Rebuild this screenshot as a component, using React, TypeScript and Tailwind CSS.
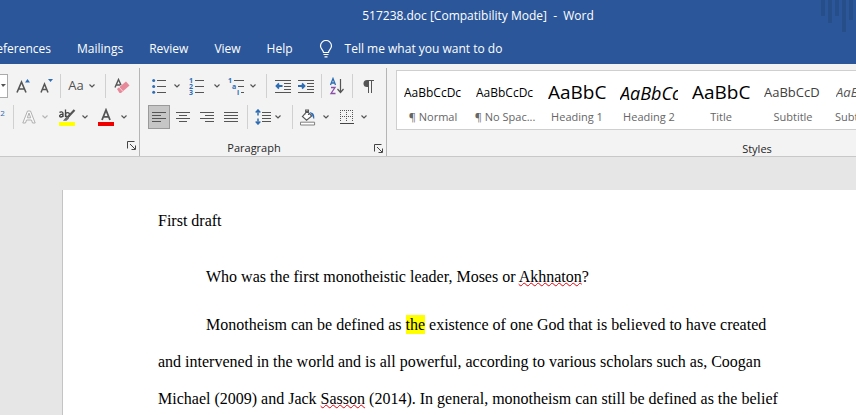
import type { ReactNode } from "react";

const tabs = ["Mailings", "Review", "View", "Help"];

const styles = [
  { name: "¶ Normal", sample: "AaBbCcDc", look: "text-xs text-black" },
  { name: "¶ No Spac...", sample: "AaBbCcDc", look: "text-xs text-black" },
  { name: "Heading 1", sample: "AaBbC", look: "text-[19px] text-black" },
  {
    name: "Heading 2",
    sample: "AaBbCc",
    look: "text-lg italic font-medium text-black",
  },
  { name: "Title", sample: "AaBbC", look: "text-[19px] text-black" },
  { name: "Subtitle", sample: "AaBbCcD", look: "text-[13px] text-[#404040]" },
  {
    name: "Subtle Em...",
    sample: "AaBbCcDd",
    look: "text-[13px] italic text-[#555555]",
  },
];

const bars = [16, 23, 16, 32, 20];

const Tool = ({
  label,
  className = "w-4",
  children,
}: {
  label: string;
  className?: string;
  children: ReactNode;
}) => (
  <button
    type="button"
    aria-label={label}
    className={`flex h-6 shrink-0 items-center justify-center ${className}`}
  >
    {children}
  </button>
);

const Arrow = ({
  label,
  className = "w-[18px]",
  color = "#555555",
}: {
  label: string;
  className?: string;
  color?: string;
}) => (
  <Tool label={label} className={className}>
    <svg width="6" height="4" viewBox="0 0 6 4" fill="none">
      <path d="M.5.5 3 3 5.5.5" stroke={color} strokeWidth="1.2" />
    </svg>
  </Tool>
);

const Divider = ({ className = "mx-[7px]" }: { className?: string }) => (
  <div className={`h-6 w-px shrink-0 bg-[#d0d0d0] ${className}`} />
);

const Launcher = ({ label }: { label: string }) => (
  <button type="button" aria-label={label}>
    <svg width="9" height="9" viewBox="0 0 9 9" fill="none" stroke="#444444">
      <path d="M.5 7.500V.5H7.500M3 3l5 5M8.500 4.500v4h-4" />
    </svg>
  </button>
);

const Lines = ({ d }: { d: string }) => (
  <svg width="14" height="12" viewBox="0 0 14 12" stroke="#555555">
    <path d={d} />
  </svg>
);

const Misspelled = ({ children }: { children: ReactNode }) => (
  <span className="underline decoration-red-600 decoration-wavy decoration-1 underline-offset-0 [text-decoration-skip-ink:none]">
    {children}
  </span>
);

const App = () => {
  return (
    <div className="flex h-screen flex-col overflow-hidden bg-[#e6e6e6] font-['Open_Sans',sans-serif] text-xs text-[#262626]">
      <header className="relative shrink-0 bg-[#2b579a] text-white">
        <svg
          className="absolute top-0 right-0"
          width="35"
          height="32"
          fill="#264f8a"
        >
          {bars.map((height, i) => (
            <rect key={i} x={i * 7} width="4" height={height} />
          ))}
        </svg>
        <h1 className="flex h-8 items-center justify-center pl-[100px] whitespace-pre">
          517238.doc [Compatibility Mode]  -  Word
        </h1>
        <nav className="flex h-8 items-center gap-[26px] pt-0.5 whitespace-nowrap">
          <a
            href="#references"
            className="flex w-[51px] justify-end overflow-hidden"
          >
            References
          </a>
          {tabs.map((tab) => (
            <a key={tab} href={`#${tab.toLowerCase()}`}>
              {tab}
            </a>
          ))}
          <button type="button" className="flex items-center gap-3">
            <svg
              width="14"
              height="18"
              viewBox="0 0 14 18"
              fill="none"
              stroke="white"
              strokeWidth="1.2"
            >
              <path d="M4.500 12.500C4.500 10 1.500 9 1.500 6a5.500 5.500 0 0 1 11 0c0 3-3 4-3 6.500zM4.500 14.500h5M5.500 16.800h3" />
            </svg>
            Tell me what you want to do
          </button>
        </nav>
      </header>

      <section className="flex h-[93px] shrink-0 overflow-hidden border-b border-[#c8c8c8] bg-[#f3f3f3] pt-1">
        <div className="flex w-[140px] shrink-0 flex-col border-r border-[#b5b5b5] pt-1.5">
          <div className="flex items-center">
            <Tool
              label="Font size"
              className="w-2 border border-l-0 border-[#ababab] bg-white"
            >
              <svg width="6" height="4" fill="#555555">
                <path d="M0 0h5L2 3z" />
              </svg>
            </Tool>
            <Tool label="Grow font" className="w-[30px]">
              <svg width="15" height="16" viewBox="0 0 15 16" fill="none">
                <path
                  d="M1 14.500 5.500 4 10 14.500M2.800 11h5.400"
                  stroke="#555555"
                  strokeWidth="1.6"
                />
                <path d="M9 4.500h5L11.500 1z" fill="#2e6db4" />
              </svg>
            </Tool>
            <Tool label="Shrink font" className="w-[18px]">
              <svg width="14" height="16" viewBox="0 0 14 16" fill="none">
                <path
                  d="M1 14.500 4.500 6 8 14.500M2.300 11.500h4.400"
                  stroke="#555555"
                  strokeWidth="1.5"
                />
                <path d="M8 1h5l-2.500 3z" fill="#2e6db4" />
              </svg>
            </Tool>
            <Divider className="mx-1" />
            <Tool label="Change case" className="w-[22px]">
              <span className="text-[13px] text-[#505050]">Aa</span>
            </Tool>
            <Arrow label="Case options" className="w-2.5" />
            <Divider className="mx-2" />
            <Tool label="Clear formatting">
              <svg width="16" height="16" viewBox="0 0 16 16" fill="none">
                <path
                  d="M1 9.500 4.500 1.500 7 7M2.300 7h4"
                  stroke="#555555"
                  strokeWidth="1.400"
                />
                <path d="m3 11 9-7.500 3.500 4L7 15H5.500z" fill="#e8899a" />
                <path d="m5 9 4 4.500" stroke="#f7d5da" />
              </svg>
            </Tool>
          </div>
          <div className="mt-[7px] flex items-center">
            <Tool label="Superscript" className="w-[5px]">
              <span className="pb-2 text-[8px] text-[#2e6db4]">2</span>
            </Tool>
            <Divider className="mx-2" />
            <Tool label="Text effects" className="w-3.5">
              <svg width="14" height="14" viewBox="0 0 14 14">
                <path
                  d="M.8 13 5.500 1h3L13.200 13h-2.700l-1-3h-5l-1 3zM5.300 7.800h3.400L7 3z"
                  fill="#fafafa"
                  stroke="#b0b0b0"
                />
              </svg>
            </Tool>
            <Arrow label="Text effect options" color="#b5b5b5" />
            <Tool label="Text highlight color" className="ml-1 w-[18px]">
              <svg width="18" height="18" viewBox="0 0 18 18" fill="none">
                <g stroke="#444444" strokeWidth="1.300">
                  <path d="M1.500 4.500c1-1 3.500-1 3.500 1V9M5 6.200C1 6.200 1 9 2.800 9 4 9 5 8 5 7M7.500 1.500V9" />
                  <circle cx="9.500" cy="6.700" r="2" />
                </g>
                <path d="m16.500 2-7 7.500" stroke="#555555" strokeWidth="2.200" />
                <path d="m8.500 8.500 2.500 2-2.500 2.300H5z" fill="#6a6a6a" />
                <path d="M1 14h16v4H1z" fill="#ffff00" />
              </svg>
            </Tool>
            <Arrow label="Highlight options" />
            <Tool label="Font color" className="ml-1 w-4">
              <svg width="16" height="18" viewBox="0 0 16 18" fill="none">
                <path
                  d="M4 12 8 2l4 10M5.300 8.800h5.400"
                  stroke="#555555"
                  strokeWidth="1.800"
                />
                <path d="M0 14h16v4H0z" fill="#ee0000" />
              </svg>
            </Tool>
            <Arrow label="Font color options" className="w-5" />
          </div>
          <div className="mt-2.5 flex justify-end pt-0.5 pr-[3px]">
            <Launcher label="Font settings" />
          </div>
        </div>

        <div className="flex w-[247px] shrink-0 flex-col border-r border-[#b5b5b5] pt-1.5 pl-2">
          <div className="flex items-center">
            <Tool label="Bullets" className="w-[22px]">
              <svg width="14" height="16" viewBox="0 0 14 16">
                <path d="M5 2.500h9M5 8.500h9M5 14.500h9" stroke="#555555" />
                <g fill="#2e6db4">
                  <circle cx="1.700" cy="2.500" r="1.500" />
                  <circle cx="1.700" cy="8.500" r="1.500" />
                  <circle cx="1.700" cy="14.300" r="1.500" />
                </g>
              </svg>
            </Tool>
            <Arrow label="Bullet options" className="w-3.5" />
            <Tool label="Numbering" className="w-[26px]">
              <svg width="16" height="18" viewBox="0 0 16 18">
                <path d="M6 3.500h9M6 9.500h9M6 15.500h9" stroke="#555555" />
                <g fill="#2e6db4" fontSize="7" fontWeight="700">
                  <text x="0" y="6">1</text>
                  <text x="0" y="12">2</text>
                  <text x="0" y="18">3</text>
                </g>
              </svg>
            </Tool>
            <Arrow label="Numbering options" className="w-3.5" />
            <Tool label="Multilevel list" className="w-6">
              <svg width="17" height="18" viewBox="0 0 17 18">
                <path d="M6 3.500h10M10 9.500h6M13 15.500h3" stroke="#555555" />
                <g fill="#2e6db4" fontSize="7" fontWeight="700">
                  <text x="0" y="6">1</text>
                  <text x="4" y="12">a</text>
                  <text x="9" y="18">i</text>
                </g>
              </svg>
            </Tool>
            <Arrow label="Multilevel options" className="w-2.5" />
            <Divider className="mx-2" />
            <Tool label="Decrease indent">
              <svg width="16" height="14" viewBox="0 0 16 14" fill="none">
                <path
                  d="M0 1.500h16M9 4.500h7M9 7.500h7M9 10.500h7M0 13.500h16"
                  stroke="#555555"
                />
                <path
                  d="M7.500 7H2M4 4.500 1.500 7 4 9.500"
                  stroke="#2e6db4"
                  strokeWidth="1.800"
                />
              </svg>
            </Tool>
            <Tool label="Increase indent" className="ml-[7px] w-4">
              <svg width="16" height="14" viewBox="0 0 16 14" fill="none">
                <path
                  d="M0 1.500h16M9 4.500h7M9 7.500h7M9 10.500h7M0 13.500h16"
                  stroke="#555555"
                />
                <path
                  d="M0 7h6M4 4.500 6.500 7 4 9.500"
                  stroke="#2e6db4"
                  strokeWidth="1.800"
                />
              </svg>
            </Tool>
            <Divider />
            <Tool label="Sort">
              <svg width="16" height="18" viewBox="0 0 16 18" fill="none">
                <path
                  d="M1.500 8 4 1.500 6.500 8M2.300 6h3.400"
                  stroke="#2e6db4"
                  strokeWidth="1.300"
                />
                <path
                  d="M2 10.500h4L2 16.500h4.500"
                  stroke="#8a4fa8"
                  strokeWidth="1.300"
                />
                <path
                  d="M11.500 2v13M8.500 12l3 3.500 3-3.500"
                  stroke="#555555"
                  strokeWidth="1.200"
                />
              </svg>
            </Tool>
            <Divider />
            <Tool label="Show paragraph marks">
              <svg width="11" height="13" viewBox="0 0 11 13" fill="none">
                <path d="M5 0H4a3.500 3.500 0 0 0 0 7h1z" fill="#555555" />
                <path d="M4 .5h7M5.500 0v13M8.500 0v13" stroke="#555555" />
              </svg>
            </Tool>
          </div>
          <div className="mt-[7px] flex items-center">
            <Tool
              label="Align left"
              className="mr-px w-[22px] border border-[#9a9a9a] bg-[#c6c6c6]"
            >
              <Lines d="M0 1.500h14M0 4.500h9M0 7.500h14M0 10.500h9" />
            </Tool>
            <Tool label="Center" className="w-6">
              <Lines d="M0 1.500h14M3 4.500h8M0 7.500h14M3 10.500h8" />
            </Tool>
            <Tool label="Align right" className="w-6">
              <Lines d="M0 1.500h14M5 4.500h9M0 7.500h14M5 10.500h9" />
            </Tool>
            <Tool label="Justify" className="w-6">
              <Lines d="M0 1.500h14M0 4.500h14M0 7.500h14M0 10.500h14" />
            </Tool>
            <Divider className="mr-[7px] ml-1" />
            <Tool label="Line spacing">
              <svg width="16" height="16" viewBox="0 0 16 16" fill="none">
                <path
                  d="M7 3.500h9M7 6.500h9M7 9.500h9M7 12.500h9"
                  stroke="#555555"
                />
                <path
                  d="M3 1v5.500M3 9.500V15M.7 3.500 3 1l2.300 2.500M.7 12.500 3 15l2.300-2.500"
                  stroke="#2e6db4"
                  strokeWidth="1.500"
                />
              </svg>
            </Tool>
            <Arrow label="Line spacing options" className="w-3.5" />
            <Divider />
            <Tool label="Shading">
              <svg width="17" height="18" viewBox="0 0 17 18" fill="none">
                <path
                  d="m2.500 8.500 5-5.500 5 5-5.500 4.500zM6 6V1.500h3V7"
                  fill="white"
                  stroke="#555555"
                  strokeWidth="1.200"
                />
                <path
                  d="M10 4c3.500 0 6 2 5 7.500-1-1-1.500-2.500-2-4z"
                  fill="#2e6db4"
                />
                <path d="M.5 14.500h15v3H.5z" fill="white" stroke="#777777" />
              </svg>
            </Tool>
            <Arrow label="Shading options" className="w-5" />
            <Tool label="Borders" className="ml-[3px] w-4">
              <svg width="14" height="14" viewBox="0 0 14 14" fill="none">
                <path
                  d="M0 .5h14M0 6.500h14M.5 0v12M6.500 0v12M12.500 0v12"
                  stroke="#555555"
                  strokeDasharray="1 1"
                />
                <path d="M0 13.500h14" stroke="#444444" />
              </svg>
            </Tool>
            <Arrow label="Border options" />
          </div>
          <div className="mt-[11px] flex items-center pr-[3px]">
            <span className="flex-1 pr-3.5 text-center text-[11px] leading-4">
              Paragraph
            </span>
            <Launcher label="Paragraph settings" />
          </div>
        </div>

        <div className="w-[740px] shrink-0 pt-0.5">
          <div className="ml-[9px] flex h-[60px] border border-[#cfcfcf] bg-white">
            {styles.map((style) => (
              <button
                key={style.name}
                type="button"
                className="flex w-[72px] shrink-0 flex-col px-[7px] pt-2"
              >
                <span
                  className={`flex h-7 w-full items-center overflow-hidden whitespace-nowrap ${style.look}`}
                >
                  {style.sample}
                </span>
                <span className="flex w-full justify-center text-[11px] leading-5 whitespace-nowrap text-[#666666]">
                  {style.name}
                </span>
              </button>
            ))}
          </div>
          <p className="mt-[11px] text-center text-[11px] leading-4">Styles</p>
        </div>
      </section>

      <main className="mt-[33px] ml-[62px] flex-1 border-l border-[#c4c4c4] bg-white pt-3 pl-[95px] font-['Liberation_Serif',serif] text-base leading-[37px] whitespace-nowrap text-black">
        <p>First draft</p>
        <p className="mt-[19px] indent-12">
          Who was the first monotheistic leader, Moses or{" "}
          <Misspelled>Akhnaton</Misspelled>?
        </p>
        <p className="mt-[11px] indent-12">
          Monotheism can be defined as{" "}
          <mark className="bg-[#ffff00] py-px text-black">the</mark> existence
          of one God that is believed to have created
          <br />
          and intervened in the world and is all powerful, according to various
          scholars such as, Coogan
          <br />
          Michael (2009) and Jack <Misspelled>Sasson</Misspelled> (2014). In
          general, monotheism can still be defined as the belief
        </p>
      </main>
    </div>
  );
};

export default App;
